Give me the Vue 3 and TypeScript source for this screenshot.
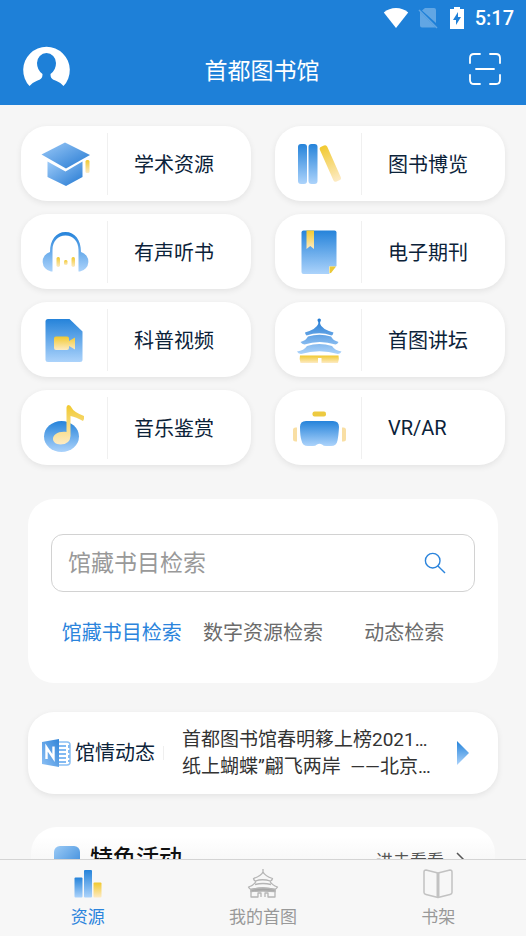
<script setup lang="ts">
import { ref } from 'vue'

interface Entry {
  id: string
  label: string
}

const entries: Entry[] = [
  { id: 'cap', label: '学术资源' },
  { id: 'books', label: '图书博览' },
  { id: 'audio', label: '有声听书' },
  { id: 'journal', label: '电子期刊' },
  { id: 'video', label: '科普视频' },
  { id: 'temple', label: '首图讲坛' },
  { id: 'music', label: '音乐鉴赏' },
  { id: 'vr', label: 'VR/AR' },
]

const scopes: string[] = ['馆藏书目检索', '数字资源检索', '动态检索']
const activeScope = ref<number>(0)
const query = ref<string>('')

const news: string[] = ['首都图书馆春明簃上榜2021…', '纸上蝴蝶”翩飞两岸  ——北京…']

const tabs: Entry[] = [
  { id: 'resource', label: '资源' },
  { id: 'mine', label: '我的首图' },
  { id: 'shelf', label: '书架' },
]
const activeTab = ref<string>('resource')
</script>

<template>
  <div class="app">
    <svg class="defs" width="0" height="0" aria-hidden="true">
      <defs>
        <linearGradient id="blue" x1="0" y1="0" x2="0" y2="1">
          <stop offset="0" stop-color="#2583da" />
          <stop offset="1" stop-color="#acd3fb" />
        </linearGradient>
        <linearGradient id="blueRise" x1="1" y1="0" x2="0" y2="1">
          <stop offset="0" stop-color="#3285d8" />
          <stop offset="1" stop-color="#8dc0f5" />
        </linearGradient>
        <linearGradient id="blueSoft" x1="0" y1="0" x2="1" y2="1">
          <stop offset="0" stop-color="#9ccbf6" />
          <stop offset="1" stop-color="#3285d8" />
        </linearGradient>
        <linearGradient id="blueFall" x1="0" y1="0" x2="1" y2="1">
          <stop offset="0" stop-color="#9ccaf8" />
          <stop offset="1" stop-color="#2479d2" />
        </linearGradient>
        <linearGradient id="gold" x1="0" y1="0" x2="0" y2="1">
          <stop offset="0" stop-color="#f1c92f" />
          <stop offset="1" stop-color="#fdebc4" />
        </linearGradient>
        <linearGradient id="templeBlue" gradientUnits="userSpaceOnUse" x1="0" y1="2" x2="0" y2="40">
          <stop offset="0" stop-color="#1f78d2" />
          <stop offset="1" stop-color="#b4d8fc" />
        </linearGradient>
      </defs>
    </svg>

    <header class="header">
      <div class="status">
        <svg width="26" height="22" viewBox="0 0 26 22"><path d="M13 21 .8 5.600C7-.5 19-.5 25.200 5.600Z" fill="#fff" /></svg>
        <svg width="20" height="22" viewBox="0 0 20 22">
          <path d="M7 1h9q2 0 2 2v13L4 3.500ZM2 5l15.500 15.500H4q-2 0-2-2Z" fill="#fff" opacity=".3" />
          <path d="m1 3 18 18" stroke="#fff" stroke-width="1.500" opacity=".3" />
        </svg>
        <svg width="14" height="22" viewBox="0 0 14 22">
          <path d="M4 0h6v2h4v20H0V2h4Z" fill="#fff" />
          <path d="M8 5 3 13h3v5l5-8H8Z" fill="#1e80d8" />
        </svg>
        <span class="clock">5:17</span>
      </div>
      <div class="bar">
        <button class="icon-btn" aria-label="个人中心">
          <svg width="48" height="44" viewBox="0 0 48 44">
            <path d="M6.500 39A23.300 23.300 0 1 1 40.500 39Q38.500 36 33.500 34C28.500 32 27.500 31 27.500 27Q33 23 33 16A9.500 10 0 0 0 14 16Q14 23 19.500 27C19.500 31 18.500 32 13.500 34Q8.500 36 6.500 39Z" fill="#fff" />
          </svg>
        </button>
        <h1 class="title">首都图书馆</h1>
        <button class="icon-btn" aria-label="扫一扫">
          <svg width="32" height="32" viewBox="0 0 32 32" fill="none" stroke="#fff" stroke-width="1.800" stroke-linecap="round">
            <path d="M11 1H5Q1 1 1 5v5M21 1h6q4 0 4 4v5M11 31H5q-4 0-4-4v-5M21 31h6q4 0 4-4v-5M7 16h18" />
          </svg>
        </button>
      </div>
    </header>

    <main class="main">
      <nav class="grid">
        <a v-for="e in entries" :key="e.id" class="card" href="#">
          <span class="card-icon">
            <svg width="52" height="48" viewBox="0 0 52 48">
              <g v-if="e.id === 'cap'">
                <path d="M2.500 14.500 26 2.500 51 15 27 28.500Z" fill="url(#blueFall)" />
                <path d="M8.500 21.500 26.500 31.500 43.500 21.500V37L27 46 8.500 37Z" fill="url(#blueFall)" />
                <rect x="46.500" y="20" width="4" height="13" rx="1.500" fill="url(#gold)" />
              </g>
              <g v-else-if="e.id === 'books'">
                <rect x="5" y="4" width="9" height="40" rx="3" fill="url(#blue)" />
                <rect x="15.500" y="4" width="9" height="40" rx="3" fill="url(#blue)" />
                <rect x="26" y="6" width="8" height="38" rx="2.500" fill="url(#gold)" transform="rotate(-24 30 7)" />
              </g>
              <g v-else-if="e.id === 'audio'">
                <path d="M13.500 43.500H12A10 10 0 0 1 11 24C11 12 17 4 26.500 4S42 12 42 24A10 10 0 0 1 41 43.500H39.500V22C39.500 13 34 7.500 26.500 7.500S13.500 13 13.500 22Z" fill="url(#blue)" />
                <rect x="17.500" y="29" width="3.500" height="10" rx="1.700" fill="url(#gold)" />
                <rect x="25" y="32" width="3.500" height="5" rx="1.500" fill="url(#gold)" />
                <rect x="32.500" y="29" width="3.500" height="10" rx="1.700" fill="url(#gold)" />
              </g>
              <g v-else-if="e.id === 'journal'">
                <path d="M10.500 2.500h31q2 0 2 2V38l-7 8h-26q-2 0-2-2V4.500q0-2 2-2Z" fill="url(#blue)" />
                <path d="M13.500 2.500H21V21l-3.750-3-3.750 3Z" fill="url(#gold)" />
                <path d="M36 38.500h7.500L36 46Z" fill="#fff" />
                <path d="M36.500 38.500h6.500l-5 6.500h-1.500Z" fill="#ecc937" />
              </g>
              <g v-else-if="e.id === 'video'">
                <path d="M9 3h21.500l13 12.500V43.500q0 2.500-2.500 2.500H9q-2.500 0-2.500-2.500v-38Q6.500 3 9 3Z" fill="url(#blue)" />
                <path d="M17 20.500h11q2 0 2 2v2.500l6-3.500v12L30 30v2q0 2-2 2H17q-2 0-2-2v-9.500q0-2 2-2Z" fill="url(#gold)" />
              </g>
              <g v-else-if="e.id === 'temple'" fill="url(#templeBlue)">
                <path d="M24.700 5a1.700 1.700 0 1 1 3 0q-1 1-.5 3Q28.500 13 40.500 16.500 40 19 38.500 19.500 26.500 15 13.500 19.500 12 18 12 16.500 23.500 13 25.200 8 25.700 6 24.700 5Z" />
                <path d="M15 20.500q11.500-3.500 23 0Q40 24.500 45.500 26q-1 2-3 2.500-16-5-31 0-2.500-.5-4-2.500 5.500-1.500 7.500-5.500Z" />
                <path d="M14 30q12-4 25 0 3 4.500 9.500 5.500-1 2-3.500 2.500Q26.500 32.500 8 38 5 37.500 4 35.500 11 34.500 14 30Z" />
                <path d="M7 39.500h38.500q1 3.500-.5 7.500H28.500v-5H25v5H7.500Q6 43 7 39.500Z" fill="url(#gold)" />
              </g>
              <g v-else-if="e.id === 'music'">
                <ellipse cx="22.500" cy="32.500" rx="17.500" ry="15.500" fill="url(#blue)" />
                <path d="M27.500 28V3.500Q27.500 1 29.500 1q2 0 3 2.500 2 4.500 12.500 8.500.5 3-1 5-7-4-12.500-5V32Q31 40.500 21.500 40.500c-5 0-7.500-3-7.500-5.500 0-4 5-8 13.500-7Z" fill="url(#gold)" />
              </g>
              <g v-else>
                <rect x="19.500" y="7.500" width="13.500" height="5" rx="2" fill="#edca40" />
                <path d="M13 17h27q6 0 6 6-.5 9-1.500 13.500-1 5.500-6.500 5.500h-5q-2.500 0-4-1.500-2.500-1.500-5 0Q22.500 42 20 42h-5q-5.500 0-6.500-5.500Q7 32 7 23q0-6 6-6Z" fill="url(#blue)" />
                <path d="M4 23.500v14H2.500q-2.500 0-2.500-2.500v-9q0-2.500 2.500-2.500ZM49 23.500h1.500q2.500 0 2.500 2.500v9q0 2.500-2.500 2.500H49Z" fill="#f9dfa4" />
              </g>
            </svg>
          </span>
          <span class="card-label">{{ e.label }}</span>
        </a>
      </nav>

      <section class="search">
        <form class="search-box" @submit.prevent>
          <input v-model="query" type="text" placeholder="馆藏书目检索" aria-label="馆藏书目检索" />
          <button class="icon-btn" type="submit" aria-label="检索">
            <svg width="22" height="22" viewBox="0 0 22 22" fill="none" stroke="#2b84dc" stroke-width="1.400">
              <circle cx="8.700" cy="8.700" r="7.300" /><path d="m13.700 13.700 7.300 7.300" />
            </svg>
          </button>
        </form>
        <div class="scopes">
          <button
            v-for="(s, i) in scopes"
            :key="s"
            :class="['scope', { active: i === activeScope }]"
            @click="activeScope = i"
          >{{ s }}</button>
        </div>
      </section>

      <a class="news" href="#">
        <svg class="news-icon" width="31" height="30" viewBox="0 0 31 30">
          <path d="M18 4h8q3 0 3 3v17q0 3-3 3h-8" fill="#fff" stroke="#8cc0f4" stroke-width="1.500" />
          <path d="M18 8h7M18 12h7M18 16h7M18 20h7M18 24h7" stroke="#83baf2" stroke-width="2" />
          <path d="M28 7v17" stroke="#83baf2" stroke-width="2" stroke-dasharray="3 2" />
          <path d="M1 4 18 1v28L1 26Z" fill="url(#blueRise)" />
          <path d="M5.500 21V9.500L12.500 20V8.500" fill="none" stroke="#fff" stroke-width="2.400" />
        </svg>
        <span class="news-title">馆情动态</span>
        <span class="news-list">
          <span v-for="n in news" :key="n" class="news-line">{{ n }}</span>
        </span>
        <svg class="news-arrow" width="12" height="24" viewBox="0 0 12 24"><path d="M0 0 12 12 0 24Z" fill="url(#blue)" /></svg>
      </a>

      <section class="feature">
        <svg width="26" height="26" viewBox="0 0 26 26"><rect width="26" height="26" rx="6" fill="url(#blueSoft)" /></svg>
        <h2 class="feature-title">特色活动</h2>
        <a class="more" href="#">
          进去看看
          <svg width="8" height="14" viewBox="0 0 8 14" fill="none" stroke="#555" stroke-width="1.500"><path d="m1 1 6 6-6 6" /></svg>
        </a>
      </section>
    </main>

    <nav class="tabbar">
      <button
        v-for="t in tabs"
        :key="t.id"
        :class="['tab', { active: t.id === activeTab }]"
        @click="activeTab = t.id"
      >
        <svg width="32" height="30" viewBox="0 0 32 30">
          <g v-if="t.id === 'resource'">
            <rect x="2.500" y="8.500" width="8" height="20" rx="1" fill="url(#blue)" />
            <rect x="12" y="1" width="8" height="27.500" rx="1" fill="url(#blue)" />
            <rect x="21.500" y="13.500" width="8" height="15" rx="1" fill="url(#gold)" />
          </g>
          <g v-else-if="t.id === 'mine'" fill="none" stroke="#b5b5b5" stroke-width="1.300" stroke-linejoin="round">
            <path d="M16 0v3Q14 7 6.500 9.500 7 12 8.500 12 15 9.500 23.500 12q1.500-.5 2-2.500Q18 7 16 3M9 12.500Q7 16 1.500 18q1 2.500 3 2.500 11-3 23 0 2-.5 3-2.500-5.500-2-7.500-5.500M8 15.500q8-2 16 0M4 20.500V28h7v-4h3v4M18 28v-4h3v4h7v-7.500" />
            <path d="M4 20.500q12-3 24 0v2q-12-1-24 0Z" fill="#a5a5a5" />
          </g>
          <g v-else fill="none" stroke="#c2c2c2" stroke-width="1.500" stroke-linejoin="round">
            <path d="M16 4 4 1Q2 1 2 3v20.500q0 1.500 2 2l12 3 12-3q2-.5 2-2V3q0-2-2-2Z" />
            <path d="M16 4v24" stroke-width="3" />
          </g>
        </svg>
        <span>{{ t.label }}</span>
      </button>
    </nav>
  </div>
</template>

<style>
body {
  background: #f6f6f6;
}
</style>

<style scoped>
.app {
  height: 100vh;
  display: flex;
  flex-direction: column;
  background: #f6f6f6;
  font-family: Roboto, "Noto Sans CJK SC", sans-serif;
  color: #0b2239;
}
.defs {
  position: absolute;
}
svg {
  display: block;
  overflow: visible;
}
button {
  padding: 0;
  border: 0;
  background: none;
  font: inherit;
  color: inherit;
}
a {
  color: inherit;
  text-decoration: none;
}
.header {
  flex: none;
  background: #1e80d8;
  color: #fff;
}
.status {
  display: flex;
  justify-content: flex-end;
  align-items: center;
  height: 36px;
  padding-right: 12px;
}
.status svg:nth-child(2) {
  margin-left: 9px;
}
.status svg:nth-child(3) {
  margin-left: 12px;
}
.clock {
  margin-left: 11px;
  font-size: 20px;
  font-weight: 500;
}
.bar {
  display: grid;
  grid-template-columns: 1fr auto 1fr;
  align-items: center;
  height: 65px;
  padding: 0 25px 4px 23px;
}
.bar .icon-btn:last-child {
  justify-self: end;
}
.bar .icon-btn:first-child {
  justify-self: start;
}
.title {
  margin: 0;
  font-size: 23px;
  font-weight: 400;
}
.main {
  flex: 1;
  min-height: 0;
  overflow-y: auto;
  scrollbar-width: none;
  padding-bottom: 30px;
}
.grid {
  display: grid;
  grid-template-columns: 1fr 1fr;
  gap: 13px 24px;
  padding: 21px 21px 0;
}
.card {
  display: flex;
  align-items: center;
  height: 75px;
  border-radius: 26px;
  background: #fff;
  box-shadow: 0 2px 6px rgba(0, 0, 0, 0.08);
}
.card-icon {
  display: flex;
  align-items: center;
  justify-content: center;
  width: 87px;
  height: 62px;
  padding-left: 2px;
  box-sizing: border-box;
  border-right: 1px solid #f0f0f0;
}
.card-label {
  padding-left: 26px;
  font-size: 20px;
}
.search {
  margin: 34px 28px 0;
  padding: 35px 23px 36px;
  border-radius: 26px;
  background: #fff;
}
.search-box {
  display: flex;
  align-items: center;
  height: 58px;
  box-sizing: border-box;
  padding: 0 28px 0 16px;
  border: 1px solid #d2d2d2;
  border-radius: 12px;
}
.search-box input {
  flex: 1;
  min-width: 0;
  padding: 0;
  border: 0;
  outline: 0;
  background: none;
  font: inherit;
  font-size: 23px;
}
.search-box input::placeholder {
  color: #999;
  opacity: 1;
}
.scopes {
  display: grid;
  grid-template-columns: repeat(3, 1fr);
  margin-top: 27px;
}
.scope {
  font-size: 20px;
  line-height: 28px;
  color: #6b6b6b;
  white-space: nowrap;
}
.scope.active {
  color: #2b84dc;
}
.news {
  display: flex;
  align-items: center;
  height: 82px;
  margin: 29px 28px 0;
  padding: 0 29px 0 13px;
  border-radius: 26px;
  background: #fff;
  box-shadow: 0 2px 6px rgba(0, 0, 0, 0.08);
}
.news-icon {
  flex: none;
}
.news-title {
  flex: none;
  margin-left: 3px;
  padding-right: 8px;
  border-right: 1px solid #efefef;
  font-size: 20px;
  line-height: 14px;
}
.news-list {
  flex: 1;
  min-width: 0;
  margin: 0 24px 0 18px;
}
.news-line {
  display: block;
  overflow: hidden;
  font-size: 19px;
  line-height: 27px;
  color: #333;
  white-space: pre;
}
.news-arrow {
  flex: none;
}
.feature {
  display: flex;
  align-items: center;
  margin: 33px 31px 0;
  padding: 15px 31px 80px 23px;
  border-radius: 26px;
  background: linear-gradient(#fff 10px, #f7f7f7 36px);
}
.feature-title {
  margin: 0 0 0 10px;
  font-size: 23px;
  line-height: 34px;
  font-weight: 500;
  color: #111;
}
.more {
  display: flex;
  align-items: center;
  gap: 12px;
  margin-left: auto;
  font-size: 17px;
  color: #555;
}
.tabbar {
  flex: none;
  display: grid;
  grid-template-columns: repeat(3, 1fr);
  border-top: 1px solid #d4d4d4;
  background: #f7f7f7;
}
.tab {
  display: flex;
  flex-direction: column;
  align-items: center;
  padding: 9px 0 6px;
  font-size: 17px;
  line-height: 26px;
  gap: 5px;
  color: #999;
}
.tab.active {
  color: #2b84dc;
}
</style>
